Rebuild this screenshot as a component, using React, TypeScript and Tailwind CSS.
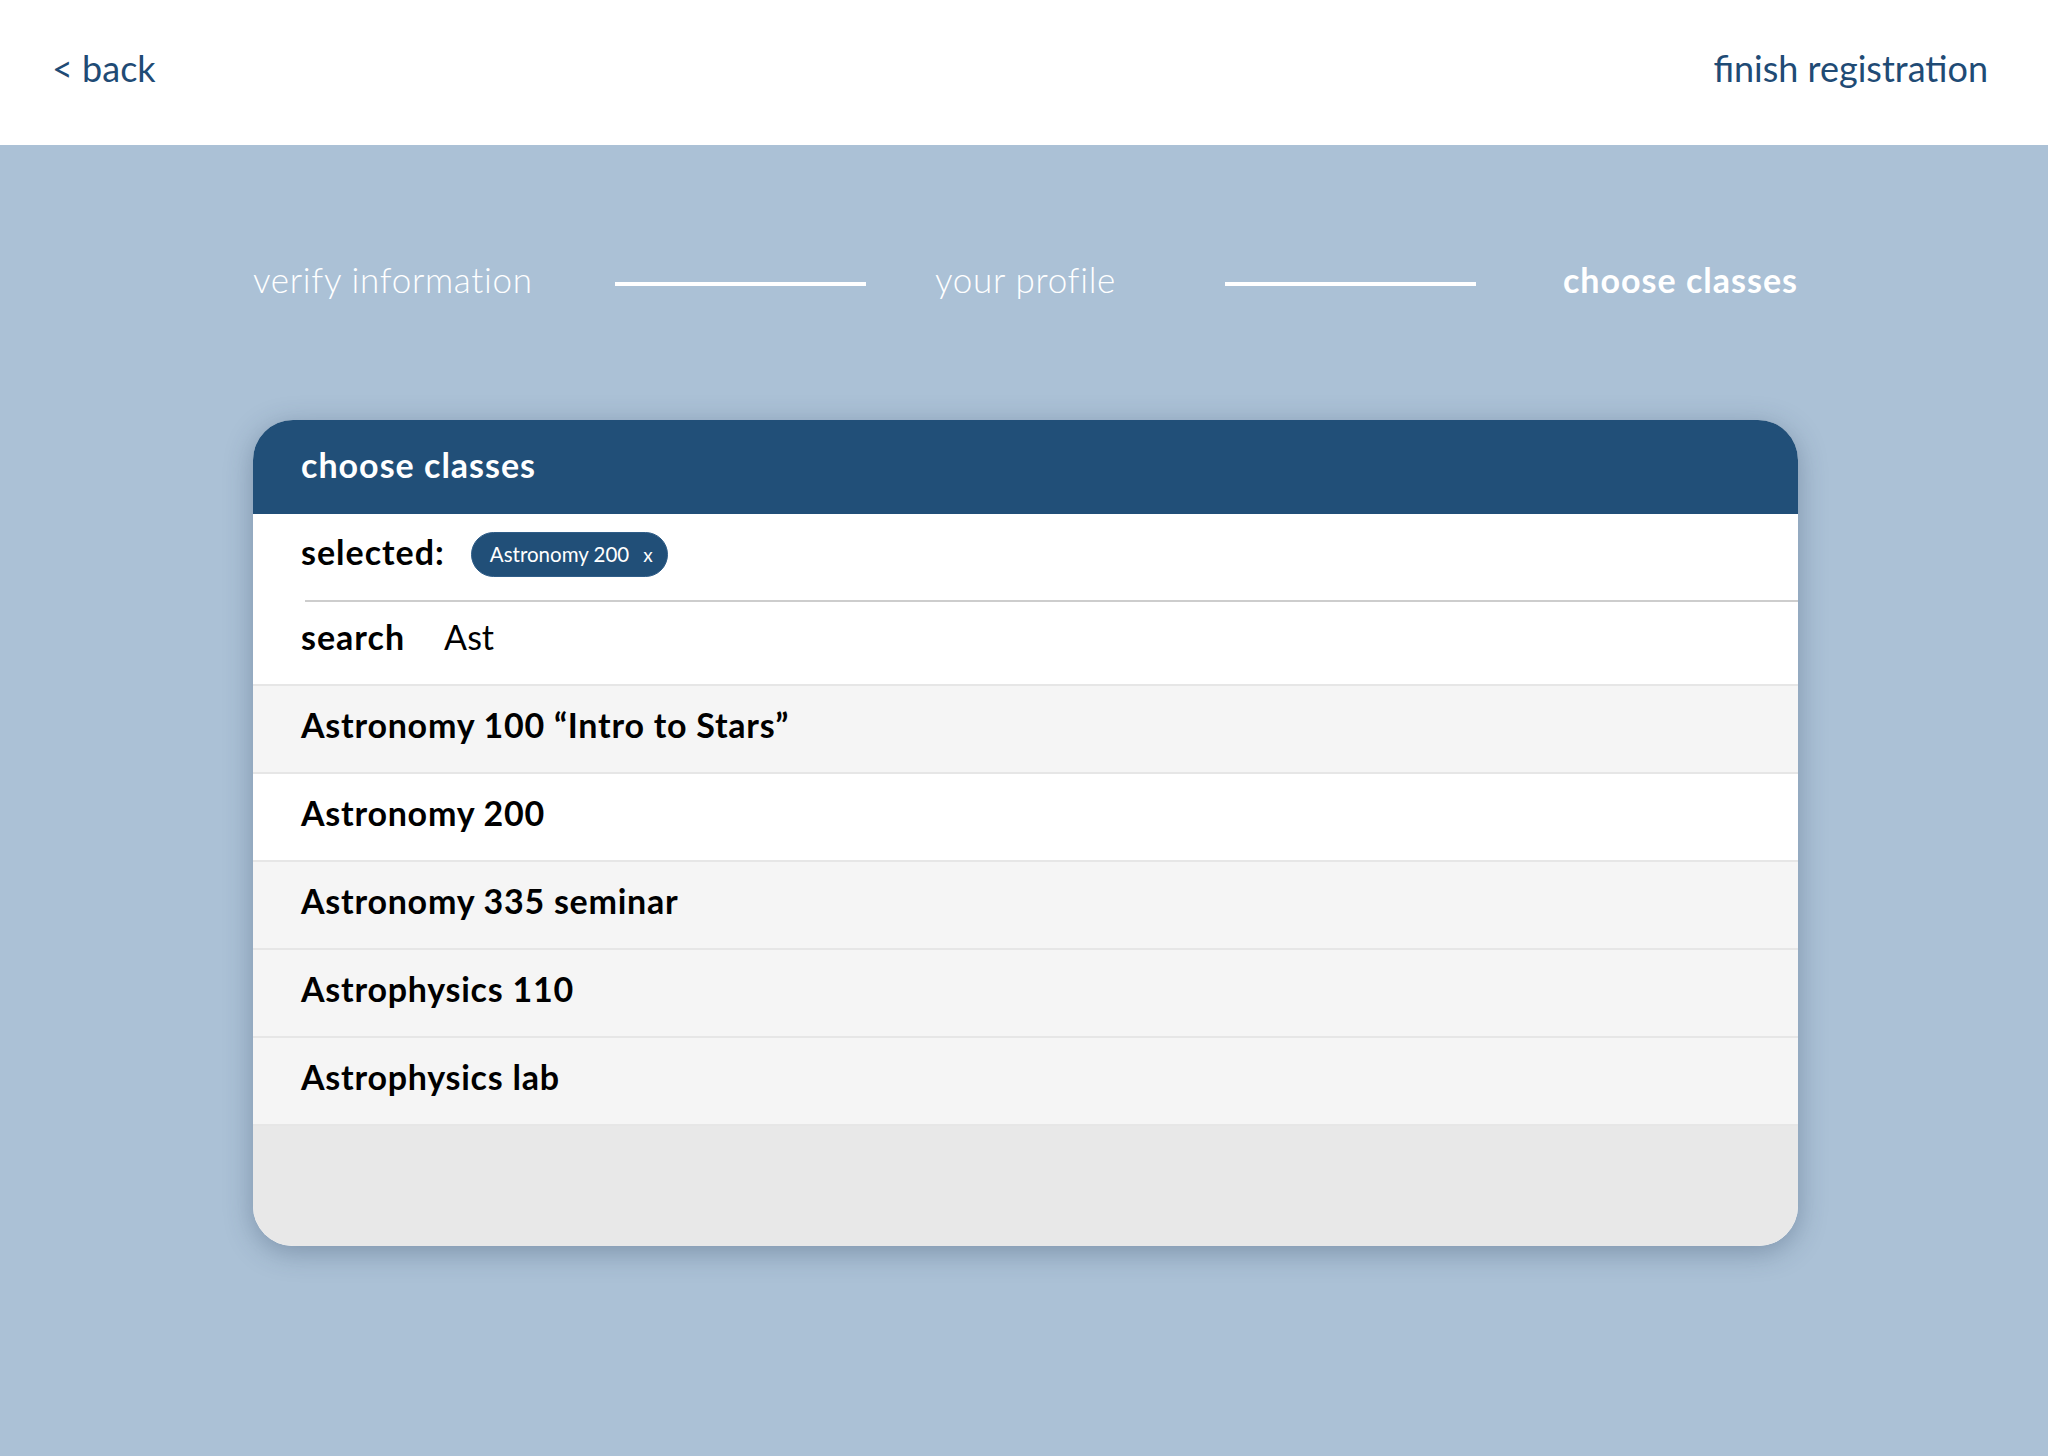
const courses = [
  { name: "Astronomy 100 “Intro to Stars”", selected: false },
  { name: "Astronomy 200", selected: true },
  { name: "Astronomy 335 seminar", selected: false },
  { name: "Astrophysics 110", selected: false },
  { name: "Astrophysics lab", selected: false },
];

function Steps() {
  return (
    <div className="ml-[253px] mt-[113px] flex w-[1545px] items-start text-[35px] leading-[1.2] text-white">
      <span className="w-[362px] font-light tracking-[0.7px]">verify information</span>
      <span className="mt-[24px] h-[4px] w-[251px] bg-white" />
      <span className="ml-[69px] w-[290px] font-light tracking-[0.7px]">your profile</span>
      <span className="mt-[24px] h-[4px] w-[251px] bg-white" />
      <span className="ml-auto mt-[2px] text-[34px] font-bold tracking-[1px]">choose classes</span>
    </div>
  );
}

function ClassPicker() {
  return (
    <div className="ml-[253px] mt-[119px] w-[1545px] overflow-hidden rounded-[40px] bg-white shadow-[0_6px_28px_rgba(40,60,90,0.35)]">
      <div className="h-[94px] bg-[#214f78] pl-12 pt-[25px] text-[34px] font-bold leading-[1.2] tracking-[1px] text-white">
        choose classes
      </div>

      <div className="flex h-[86px] items-center pb-[8px] pl-12">
        <span className="text-[34px] font-bold leading-[1.2] tracking-[1px] text-black">selected:</span>
        <span className="ml-[26px] mt-[4px] flex h-[45px] items-center rounded-full border border-[#2f5d88] bg-[#214f78] pl-[18px] pr-[14px] text-[20.5px] text-white">
          Astronomy 200
          <span className="ml-[14px] text-[19px]">x</span>
        </span>
      </div>
      <div className="ml-[52px] h-[2px] bg-[#cdcdcd]" />

      <div className="flex h-[84px] items-center border-b-2 border-[#e6e6e6] pb-[10px] pl-12 text-[34px] leading-[1.2] text-black">
        <span className="font-bold tracking-[1px]">search</span>
        <span className="ml-[39px]">Ast</span>
      </div>

      {courses.map((c) => (
        <div
          key={c.name}
          className={`flex h-[88px] items-center border-b-2 border-[#e6e6e6] pb-[6px] pl-12 text-[34px] font-bold leading-[1.2] tracking-[0.75px] text-black ${
            c.selected ? "bg-white" : "bg-[#f5f5f5]"
          }`}
        >
          {c.name}
        </div>
      ))}

      <div className="h-[120px] bg-[#e8e8e8]" />
    </div>
  );
}

export default function App() {
  return (
    <div className="flex h-[1456px] w-full flex-col bg-[#abc1d6] font-['Lato',sans-serif]">
      <header className="flex h-[145px] items-start justify-between bg-white px-[52px] pt-[47px] text-[36px] leading-[1.2] text-[#1f4b75]">
        <span>&lt; back</span>
        <span className="mr-[8px]">finish registration</span>
      </header>
      <Steps />
      <ClassPicker />
    </div>
  );
}
